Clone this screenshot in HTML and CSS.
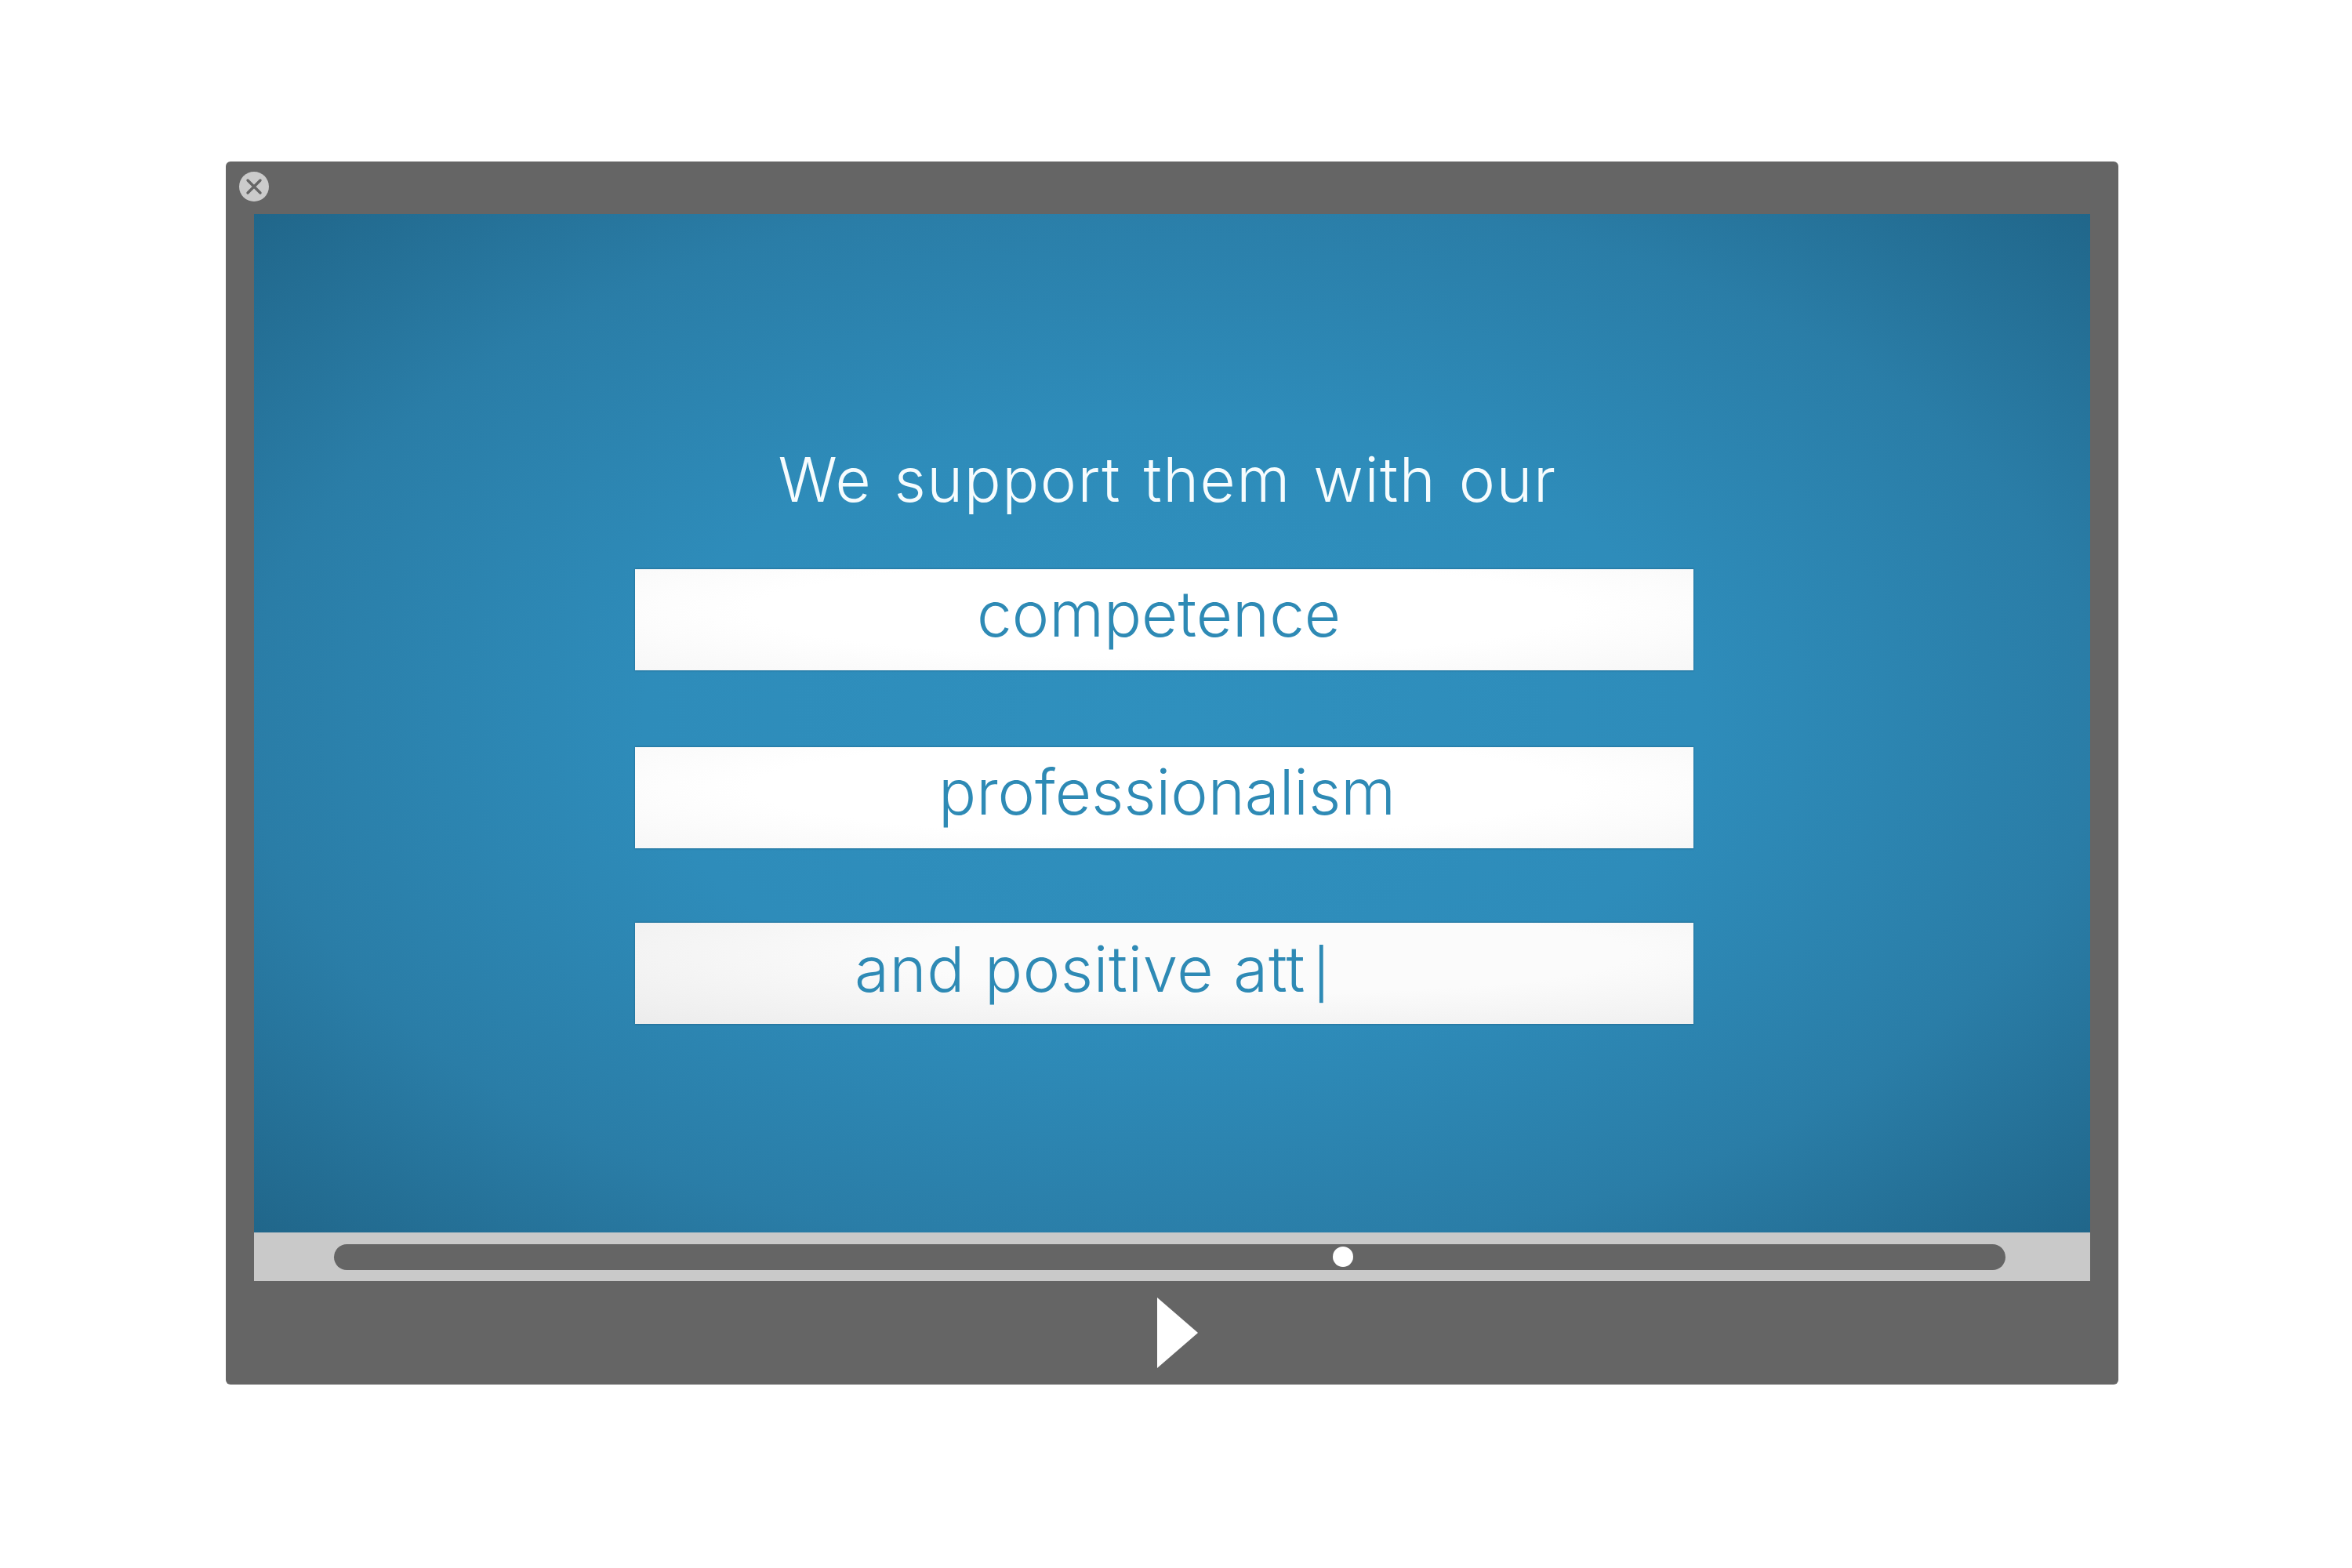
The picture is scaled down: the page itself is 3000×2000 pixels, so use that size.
FILE: index.html
```html
<!DOCTYPE html>
<html lang="en">
<head>
    <meta charset="UTF-8">
    <title>Video player</title>
    <link rel="stylesheet" href="styles.css">
</head>
<body>
    <div class="player">
        <!-- Close button -->
        <div class="close-btn">
            <svg viewBox="0 0 38 38" width="38" height="38">
                <path d="M11 11 L27 27 M27 11 L11 27" stroke="#666" stroke-width="3.4" stroke-linecap="round" fill="none"/>
            </svg>
        </div>

        <!-- Video frame -->
        <div class="screen">
            <h1 class="headline">We support them with our</h1>
            <div class="field field-first"><span>competence</span></div>
            <div class="field field-second"><span>professionalism</span></div>
            <div class="field field-third"><span>and positive att</span><span class="caret">|</span></div>
        </div>

        <!-- Seek bar -->
        <div class="seek">
            <div class="track">
                <div class="knob"></div>
            </div>
        </div>

        <!-- Play button -->
        <div class="controls">
            <svg class="play" viewBox="0 0 52 90" width="52" height="90">
                <polygon points="0,0 52,45 0,90" fill="#fff"/>
            </svg>
        </div>
    </div>
</body>
</html>
```

FILE: styles.css
```css
body {
    font-family: Inter, "Open Sans", sans-serif;
    margin: 0;
    padding: 206px 0 0 288px;
    background-color: #fff;
}
.player {
    position: relative;
    box-sizing: border-box;
    width: 2414px;
    height: 1560px;
    padding: 67px 36px 0;
    background-color: #656565;
    border-radius: 6px;
}
.close-btn {
    position: absolute;
    left: 17px;
    top: 13px;
    width: 38px;
    height: 38px;
    border-radius: 50%;
    background-color: #cbcbcb;
}
.close-btn svg {
    display: block;
}
.screen {
    box-sizing: border-box;
    height: 1299px;
    padding-top: 289px;
    background: radial-gradient(ellipse 72% 75% at 50% 50%, #2f90be 0%, #2e8cba 40%, #2a7da7 70%, #1f6386 100%);
}
.headline {
    margin: 0 0 64px;
    padding-right: 12px;
    height: 100px;
    line-height: 100px;
    text-align: center;
    font-size: 78px;
    font-weight: 300;
    letter-spacing: 1.5px;
    word-spacing: 5px;
    color: #f6fcfe;
}
.field {
    box-sizing: border-box;
    width: 1350px;
    height: 129px;
    margin-left: 486px;
    margin-bottom: 98px;
    line-height: 114px;
    font-size: 80px;
    font-weight: 300;
    color: #2e8ab5;
    background: radial-gradient(ellipse at 50% 40%, #fff 55%, #f7f7f7 100%);
    box-shadow: 0 -1px 2px rgba(20, 70, 100, 0.3), 0 1px 2px rgba(20, 70, 100, 0.3);
}
.field-first {
    padding-left: 436px;
}
.field-second {
    padding-left: 387px;
    margin-bottom: 95px;
}
.field-third {
    padding-left: 280px;
    line-height: 118px;
    letter-spacing: 0.6px;
    word-spacing: 2px;
    background: radial-gradient(ellipse at 60% 30%, #fbfbfb 40%, #ececec 100%);
}
.caret {
    margin-left: 10px;
    font-size: 62px;
    font-weight: 400;
}
.seek {
    display: flex;
    align-items: center;
    height: 62px;
    padding: 0 108px 0 102px;
    background-color: #c9c9c9;
}
.track {
    position: relative;
    flex: 1;
    height: 33px;
    border-radius: 17px;
    background-color: #656565;
}
.knob {
    position: absolute;
    left: 1274px;
    top: 3px;
    width: 26px;
    height: 26px;
    border-radius: 50%;
    background-color: #fff;
}
.controls {
    display: flex;
    justify-content: center;
    padding: 21px 0 0 14px;
}
.play {
    display: block;
}
```
